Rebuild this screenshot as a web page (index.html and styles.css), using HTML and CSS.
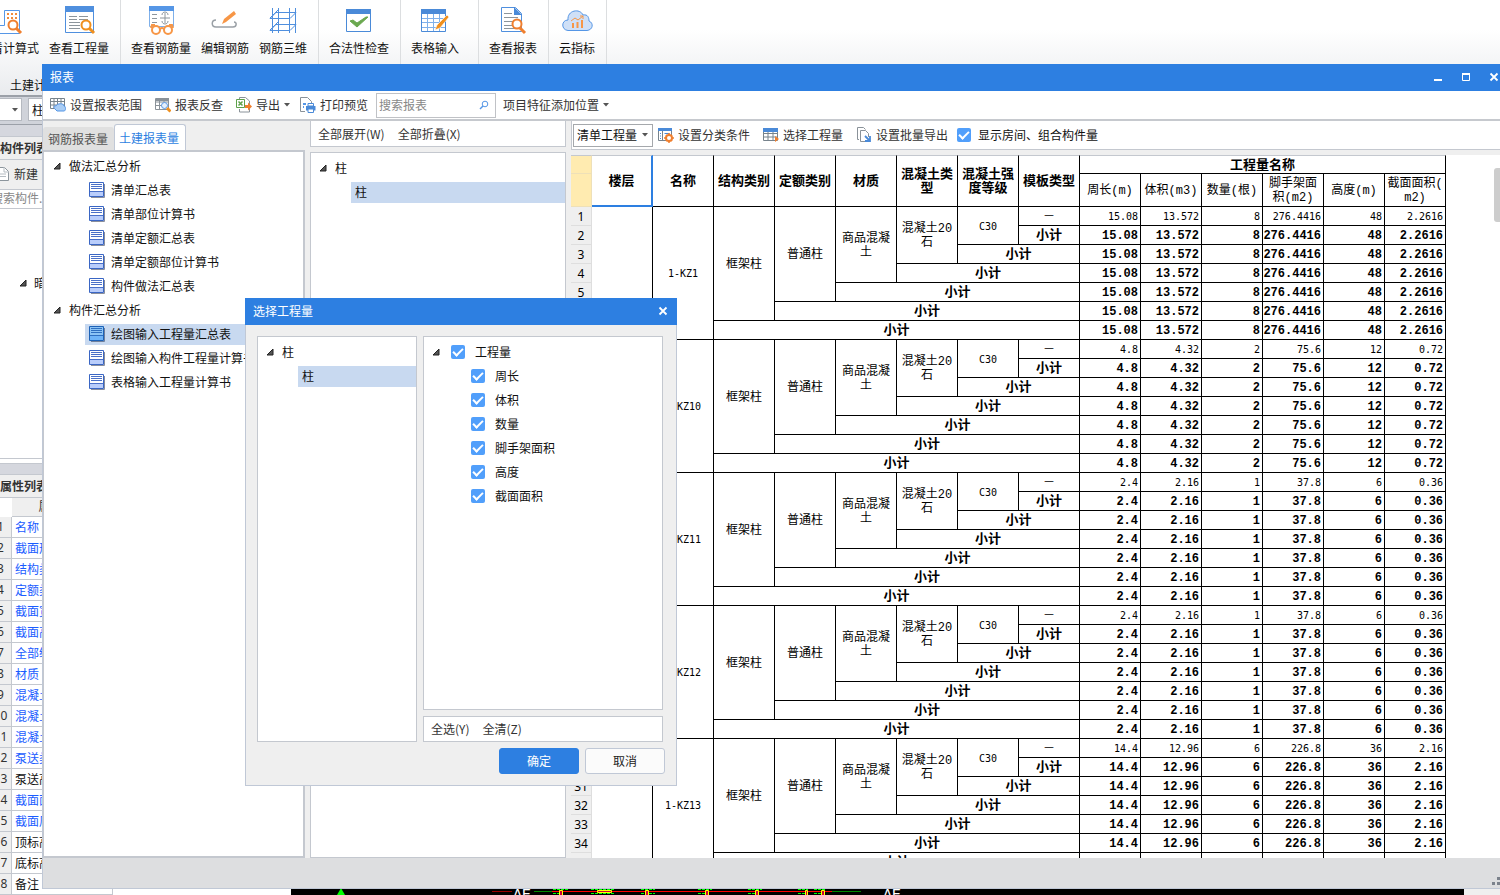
FILE: index.html
```html
<!DOCTYPE html>
<html lang="zh-CN">
<head>
<meta charset="utf-8">
<title>报表</title>
<link rel="stylesheet" href="styles.css">
</head>
<body>
<svg class="defs" aria-hidden="true">
  <symbol id="i-arrow" viewBox="0 0 8 8"><path d="M7 1v6H1z" fill="#555" stroke="#222" stroke-width="1"/></symbol>
  <symbol id="i-caret" viewBox="0 0 6 4"><path d="M0 0h6L3 3.5z" fill="#555"/></symbol>
  <symbol id="i-doc" viewBox="0 0 16 16"><path d="M2 15.5h13.5V2" fill="none" stroke="#8a8f9c"/><path d="M.5.500h14v14H.5z" fill="#fff" stroke="#3a66c4"/><path d="M1 10h13v4H1z" fill="#b9cdfb"/><path d="M1 9.500h13M2 2.500h11M2 4.500h11M2 6.500h11" stroke="#4a70c8" fill="none"/></symbol>
  <symbol id="i-doc-on" viewBox="0 0 16 16"><path d="M2 15.5h13.5V2" fill="none" stroke="#70809c"/><path d="M.5.500h14v14H.5z" fill="#8cc4f5" stroke="#1c62b8"/><path d="M1 10h13v4H1z" fill="#6fb4f8"/><path d="M1 9.500h13M2 2.500h11M2 4.500h11M2 6.500h11" stroke="#2f6fc0" fill="none"/></symbol>
</svg>
<div class="app">
  <header class="ribbon">
    <nav class="ribbon-groups">
      <div class="group">
        <button class="tool"><svg viewBox="0 0 28 28"><path d="M9.500 4.500h15v23H.5v-8h9z" fill="#fff" stroke="#5596e6"/><path d="M12 7h2v2h-2zM16 7h2v2h-2zM20 7h2v2h-2zM12 11h2v2h-2zM16 11h2v2h-2zM20 11h2v2h-2z" fill="#f08a3c"/><circle cx="18" cy="19" r="4.500" fill="#fff" stroke="#f07f2e" stroke-width="2"/><path d="M21 22l5 5" stroke="#f07f2e" stroke-width="3"/></svg>查看计算式</button>
        <button class="tool"><svg viewBox="0 0 28 28"><path d="M.5.500h28v26H.5z" fill="#fff" stroke="#4f8fde"/><path d="M0 0h29v6H0z" fill="#4f8fde"/><path d="M4 10.500h8m2 0h9M4 13.500h8m2 0h9M4 16.500h11M4 19.500h11M4 22.500h11" stroke="#8c959c"/><circle cx="21" cy="19" r="4.500" fill="#fff" stroke="#f0901e" stroke-width="2"/><path d="M24 22l5 5" stroke="#f0901e" stroke-width="3"/></svg>查看工程量</button>
      </div>
      <div class="group">
        <button class="tool"><svg viewBox="0 0 28 28"><path d="M2.500.500h24v20h-24z" fill="#fff" stroke="#7fb0ea"/><path d="M2 0h25v5H2z" fill="#5596e6"/><path d="M5 8.500h5M5 12.500h5M5 16.500h5M13 12h10M18 7v10M15 9c0-4 6-4 6 0M15 15c0 4 6 4 6 0" stroke="#8c959c" fill="none"/><g fill="#fff" stroke="#f79646" stroke-width="2"><circle cx="9" cy="24" r="4"/><circle cx="21" cy="24" r="4"/><path d="M13 23q2-2 4 0M4 22l1-3h3M26 22l-1-3h-3" fill="none"/></g></svg>查看钢筋量</button>
        <button class="tool"><svg viewBox="0 0 28 28"><path d="M5 14c-5 0-5 7 0 7h17c4 0 4-5 1-5" fill="none" stroke="#9aa0a6" stroke-width="1.500"/><path d="M11 18l2-5L23 5l2 3-10 8z" fill="#f79646"/></svg>编辑钢筋</button>
        <button class="tool"><svg viewBox="0 0 28 28"><path d="M3.500 2v25M9.500 2v25M20.500 2v25M26.500 2v25M1 12.500h20l6-6H7zM1 24.500h20l6-6H7zM1 12l8-8M1 24l8-8" fill="none" stroke="#4f8fde"/></svg>钢筋三维</button>
      </div>
      <div class="group">
        <button class="tool"><svg viewBox="0 0 28 28"><path d="M1.500 3.500h24v22h-24z" fill="#fff" stroke="#4a8ad8"/><path d="M1 3h25v5H1z" fill="#4a8ad8"/><path d="M5 15l7 6L23 11h-2l-9 6-4-3z" fill="#6aa84f" stroke="#6aa84f"/></svg>合法性检查</button>
      </div>
      <div class="group group-wide">
        <button class="tool"><svg viewBox="0 0 28 28"><path d="M.5 3.500h24v22H.5z" fill="#fff" stroke="#4a8ad8"/><path d="M0 3h25v5H0z" fill="#4a8ad8"/><path d="M1 12.500h23M1 16.500h23M1 21.500h23M6.500 8v17M12.500 8v17M18.500 8v17" stroke="#7fb0ea"/><path d="M14 24l2-5L26 9l2 2-9 11z" fill="#f0901e" stroke="#fff" stroke-width=".6"/></svg>表格输入</button>
      </div>
      <div class="group">
        <button class="tool"><svg viewBox="0 0 28 28"><path d="M2.500 1.500h14l6 6v18h-20z" fill="#fff" stroke="#4f8fde"/><path d="M15 1l8 8h-8z" fill="#4a8ad8"/><path d="M5 7.500h8M5 11.500h14M5 15.500h9M5 19.500h8M5 22.500h12" stroke="#8c959c"/><circle cx="18" cy="18" r="4.500" fill="#fff" stroke="#f07f2e" stroke-width="2"/><path d="M21 22l5 5" stroke="#f07f2e" stroke-width="3"/></svg>查看报表</button>
      </div>
      <div class="group">
        <button class="tool"><svg class="cloud" viewBox="0 0 31 28"><path d="M6 24.500C-1 24-1 14 6 14 5 4 18 2 21 9c5-1 6 3 6 6 5 2 4 9-2 9.500z" fill="#cfe0f7" stroke="#5596e6"/><path d="M10 22v-5h2v5zM14.500 22v-6h2v6zM19 22v-8h2v8z" fill="#f79646"/><path d="M9 15l4-3 3 2 5-4m-3 0h3v3" fill="none" stroke="#f79646"/></svg>云指标</button>
      </div>
    </nav>
    <div class="ribbon-caption">土建计</div>
  </header>

  <div class="workspace">
    <aside class="side">
      <div class="combos">
        <span class="combo combo-a"><svg class="caret"><use href="#i-caret"/></svg></span>
        <span class="combo combo-b">柱</span>
      </div>
      <div class="splitter"></div>
      <h2 class="panel-title">构件列表</h2>
      <div class="side-tools"><button class="btn flush"><svg class="icon" viewBox="0 0 16 16"><path d="M1.500 1.500h9l4 4v9h-13z" fill="#fff" stroke="#8c959c"/><path d="M10 1v5h5M4 8h8M4 10.500h8" fill="none" stroke="#b5bcc2"/></svg>新建</button></div>
      <div class="side-search">搜索构件...</div>
      <div class="side-tree"><svg class="arrow"><use href="#i-arrow"/></svg><span>暗柱</span></div>
      <div class="splitter second"></div>
      <h2 class="panel-title">属性列表</h2>
      <table class="props">
        <colgroup><col class="c-num"><col></colgroup>
        <thead><tr><th></th><th>属性名称</th></tr></thead>
        <tbody>
          <tr><th>1</th><td>名称</td></tr>
          <tr><th>2</th><td>截面形状</td></tr>
          <tr><th>3</th><td>结构类别</td></tr>
          <tr><th>4</th><td>定额类别</td></tr>
          <tr><th>5</th><td>截面宽度</td></tr>
          <tr><th>6</th><td>截面高度</td></tr>
          <tr><th>7</th><td>全部纵筋</td></tr>
          <tr><th>8</th><td>材质</td></tr>
          <tr><th>9</th><td>混凝土类型</td></tr>
          <tr><th>10</th><td>混凝土强度</td></tr>
          <tr><th>11</th><td>混凝土外加</td></tr>
          <tr><th>12</th><td>泵送类型</td></tr>
          <tr><th>13</th><td class="plain">泵送高度</td></tr>
          <tr><th>14</th><td>截面面积</td></tr>
          <tr><th>15</th><td>截面周长</td></tr>
          <tr><th>16</th><td class="plain">顶标高</td></tr>
          <tr><th>17</th><td class="plain">底标高</td></tr>
          <tr><th>18</th><td class="plain">备注</td></tr>
        </tbody>
      </table>
    </aside>
    <div class="side-rest"></div>
    <div class="canvas">
      <svg class="drawing" width="640" height="7" viewBox="0 0 640 7">
        <path d="M46 7l4-7 4 7z" fill="#0f0"/>
        <path d="M201 3.500h20" stroke="#900"/><path d="M243 3.500h18M540 3.500h30" stroke="#080"/><path d="M261 3.500h280" stroke="red"/>
        <g fill="none" stroke="#0f0" stroke-dasharray="3 1"><path d="M262 1.500h16M262 5.500h8M300 1.500h24M300 5.500h24M350 1.500h14M350 5.500h14M407 1.500h14M407 5.500h8M457 1.500h14M457 5.500h8M507 1.500h10M507 5.500h8M523 1.500h12M523 5.500h8"/></g>
        <g fill="#c03" stroke="#ff0"><path d="M268.500 2.500h3v5h-3zM306.500 2.500h14v2h-14zM354.500 2.500h3v5h-3zM414.500 2.500h3v5h-3zM464.500 2.500h3v5h-3zM514.500 2.500h2v5h-2zM530.500 2.500h3v5h-3z"/></g>
        <text x="222" y="11">AE</text><text x="592" y="11">AE</text>
      </svg>
    </div>
    <div class="canvas-edge"></div>
  </div>

  <section class="window">
    <header class="titlebar"><h1>报表</h1>
      <div class="winbtns">
        <button aria-label="最小化"><svg viewBox="0 0 10 10"><path d="M1 8h8" stroke="#fff" stroke-width="2"/></svg></button>
        <button aria-label="最大化"><svg viewBox="0 0 10 10"><path d="M1.500 2v6.500h7V2z" fill="none" stroke="#fff"/><path d="M1 2h8" stroke="#fff" stroke-width="2"/></svg></button>
        <button aria-label="关闭"><svg viewBox="0 0 10 10"><path d="M1.500 1.500l7 7M8.500 1.500l-7 7" stroke="#fff" stroke-width="1.800"/></svg></button>
      </div>
    </header>
    <div class="toolbar main-tools">
      <button class="btn"><svg class="icon" viewBox="0 0 16 16"><path d="M.5 1.500h14v10H.5zM.5 4.500h14M.5 8h14M4 1v10M7.500 1v10M11 1v10" fill="none" stroke="#77838c"/><path d="M5 12c-2-1-1-4 1-3 1-3 8-3 8 0 2 0 2 5 0 5H7z" fill="#a9cdf5" stroke="#5596e6"/></svg>设置报表范围</button>
      <button class="btn"><svg class="icon" viewBox="0 0 16 16"><path d="M.5 1.500h13v11H.5zM.5 5h13M.5 8.500h7M4.500 1v12M9 1v4" fill="none" stroke="#8a9299"/><path d="M1 1h13v3H1z" fill="#8a9299"/><circle cx="9.500" cy="8.500" r="3" fill="#e4effc" stroke="#5596e6"/><path d="M12 11l3.500 3.500" stroke="#f0901e" stroke-width="3"/></svg>报表反查</button>
      <button class="btn drop"><svg class="icon" viewBox="0 0 16 16"><path d="M3.500 3V.5h6l4 3.500v11h-10V12" fill="none" stroke="#8a9299"/><path d="M.5 2.500h8v8h-8z" fill="#fff" stroke="#5da14a"/><path d="M2.500 4.500l4 4M6.500 4.500l-4 4" stroke="#5da14a" stroke-width="1.500"/><path d="M9 8h3V5.500l4 4-4 4V11H9z" fill="#f07f2e"/></svg>导出<svg class="caret"><use href="#i-caret"/></svg></button>
      <button class="btn"><svg class="icon" viewBox="0 0 16 16"><path d="M5 14.500H.5V.5h7l4 4V7" fill="none" stroke="#8a9299"/><path d="M3 7h3M3 10h1" stroke="#5596e6" stroke-width="2"/><path d="M6 9h9.500v4.500H6z" fill="#4a8ad8"/><path d="M8 6.500h5.500V9H8zM8 12h5.500v3.500H8z" fill="#fff" stroke="#4a8ad8"/></svg>打印预览</button>
      <div class="search"><input type="text" placeholder="搜索报表" aria-label="搜索报表"><svg viewBox="0 0 10 10"><circle cx="6" cy="4" r="2.800" fill="none" stroke="#5596e6"/><path d="M4 6L1 9" stroke="#5596e6" stroke-width="1.500"/></svg></div>
      <button class="btn drop">项目特征添加位置<svg class="caret"><use href="#i-caret"/></svg></button>
    </div>
    <div class="body">
      <div class="col-left">
        <div class="tabs"><button class="tab">钢筋报表量</button><button class="tab active">土建报表量</button></div>
        <ul class="tree report-tree">
          <li class="node"><svg class="arrow"><use href="#i-arrow"/></svg>做法汇总分析</li>
          <li class="leaf"><span><svg class="icon"><use href="#i-doc"/></svg>清单汇总表</span></li>
          <li class="leaf"><span><svg class="icon"><use href="#i-doc"/></svg>清单部位计算书</span></li>
          <li class="leaf"><span><svg class="icon"><use href="#i-doc"/></svg>清单定额汇总表</span></li>
          <li class="leaf"><span><svg class="icon"><use href="#i-doc"/></svg>清单定额部位计算书</span></li>
          <li class="leaf"><span><svg class="icon"><use href="#i-doc"/></svg>构件做法汇总表</span></li>
          <li class="node"><svg class="arrow"><use href="#i-arrow"/></svg>构件汇总分析</li>
          <li class="leaf selected"><span><svg class="icon"><use href="#i-doc-on"/></svg>绘图输入工程量汇总表</span></li>
          <li class="leaf"><span><svg class="icon"><use href="#i-doc"/></svg>绘图输入构件工程量计算书</span></li>
          <li class="leaf"><span><svg class="icon"><use href="#i-doc"/></svg>表格输入工程量计算书</span></li>
        </ul>
      </div>
      <div class="col-mid">
        <div class="boxbar"><button class="btn">全部展开(W)</button><button class="btn">全部折叠(X)</button></div>
        <ul class="tree box">
          <li class="node"><svg class="arrow"><use href="#i-arrow"/></svg>柱</li>
          <li class="leaf selected"><span>柱</span></li>
        </ul>
      </div>
      <div class="col-right">
        <div class="toolbar sheet-tools">
          <div class="select"><select aria-label="工程量类型"><option>清单工程量</option></select><svg class="caret"><use href="#i-caret"/></svg></div>
          <button class="btn"><svg class="icon" viewBox="0 0 16 16"><path d="M.5 1.500h13v12H.5zM4.500 2v11" fill="#fff" stroke="#77838c"/><path d="M0 1h14v3H0z" fill="#4a8ad8"/><path d="M2 6.500h1M2 9h1M2 11.500h1M6.500 6.500h5" stroke="#4a8ad8"/><circle cx="11" cy="11" r="3" fill="#fff" stroke="#f07f2e" stroke-width="2"/><path d="M11 6v2M11 14v2M6 11h2M14 11h2M8 8l1 1M13 13l1 1M14 8l-1 1M8 14l1-1" stroke="#f07f2e" stroke-width="1.500"/></svg>设置分类条件</button>
          <button class="btn"><svg class="icon" viewBox="0 0 16 16"><path d="M.5 2.500h14v11H.5zM.5 6.500h14M.5 10h14M5 5v8M10 5v8" fill="#fff" stroke="#77838c"/><path d="M0 1h15v4H0z" fill="#4a8ad8"/><path d="M12 9v6l4-3z" fill="#f07f2e"/></svg>选择工程量</button>
          <button class="btn"><svg class="icon" viewBox="0 0 16 16"><path d="M3 12.500H1.500V.5h6l2 2" fill="none" stroke="#8a9299"/><path d="M10 14.500H4.500v-11h5l3 3V10" fill="#fff" stroke="#8a9299"/><path d="M9 9l4 4m1-4v5H9" fill="none" stroke="#4a8ad8" stroke-width="1.800"/></svg>设置批量导出</button>
          <label class="check"><input type="checkbox" checked>显示房间、组合构件量</label>
        </div>
        <div class="sheet">
          <table class="grid">
            <colgroup><col class="c-row"><col span="14" class="c-data"></colgroup>
            <thead>
              <tr><th class="corner"></th><th rowspan="2" class="current">楼层</th><th rowspan="2">名称</th><th rowspan="2">结构类别</th><th rowspan="2">定额类别</th><th rowspan="2">材质</th><th rowspan="2">混凝土类型</th><th rowspan="2">混凝土强度等级</th><th rowspan="2">模板类型</th><th colspan="6">工程量名称</th></tr>
              <tr class="units"><th class="corner"></th><th>周长(m)</th><th>体积(m3)</th><th>数量(根)</th><th>脚手架面积(m2)</th><th>高度(m)</th><th>截面面积(<br>m2)</th></tr>
            </thead>
            <tbody>
              <tr><th>1</th><td rowspan="35"></td><td rowspan="7" class="code">1-KZ1</td><td rowspan="6">框架柱</td><td rowspan="5">普通柱</td><td rowspan="4">商品混凝土</td><td rowspan="3">混凝土20石</td><td rowspan="2" class="code">C30</td><td>－</td><td class="n">15.08</td><td class="n">13.572</td><td class="n">8</td><td class="n">276.4416</td><td class="n">48</td><td class="n">2.2616</td></tr>
              <tr class="sum"><th>2</th><td>小计</td><td class="n">15.08</td><td class="n">13.572</td><td class="n">8</td><td class="n">276.4416</td><td class="n">48</td><td class="n">2.2616</td></tr>
              <tr class="sum"><th>3</th><td colspan="2">小计</td><td class="n">15.08</td><td class="n">13.572</td><td class="n">8</td><td class="n">276.4416</td><td class="n">48</td><td class="n">2.2616</td></tr>
              <tr class="sum"><th>4</th><td colspan="3">小计</td><td class="n">15.08</td><td class="n">13.572</td><td class="n">8</td><td class="n">276.4416</td><td class="n">48</td><td class="n">2.2616</td></tr>
              <tr class="sum"><th>5</th><td colspan="4">小计</td><td class="n">15.08</td><td class="n">13.572</td><td class="n">8</td><td class="n">276.4416</td><td class="n">48</td><td class="n">2.2616</td></tr>
              <tr class="sum"><th>6</th><td colspan="5">小计</td><td class="n">15.08</td><td class="n">13.572</td><td class="n">8</td><td class="n">276.4416</td><td class="n">48</td><td class="n">2.2616</td></tr>
              <tr class="sum"><th>7</th><td colspan="6">小计</td><td class="n">15.08</td><td class="n">13.572</td><td class="n">8</td><td class="n">276.4416</td><td class="n">48</td><td class="n">2.2616</td></tr>

              <tr><th>8</th><td rowspan="7" class="code">1-KZ10</td><td rowspan="6">框架柱</td><td rowspan="5">普通柱</td><td rowspan="4">商品混凝土</td><td rowspan="3">混凝土20石</td><td rowspan="2" class="code">C30</td><td>－</td><td class="n">4.8</td><td class="n">4.32</td><td class="n">2</td><td class="n">75.6</td><td class="n">12</td><td class="n">0.72</td></tr>
              <tr class="sum"><th>9</th><td>小计</td><td class="n">4.8</td><td class="n">4.32</td><td class="n">2</td><td class="n">75.6</td><td class="n">12</td><td class="n">0.72</td></tr>
              <tr class="sum"><th>10</th><td colspan="2">小计</td><td class="n">4.8</td><td class="n">4.32</td><td class="n">2</td><td class="n">75.6</td><td class="n">12</td><td class="n">0.72</td></tr>
              <tr class="sum"><th>11</th><td colspan="3">小计</td><td class="n">4.8</td><td class="n">4.32</td><td class="n">2</td><td class="n">75.6</td><td class="n">12</td><td class="n">0.72</td></tr>
              <tr class="sum"><th>12</th><td colspan="4">小计</td><td class="n">4.8</td><td class="n">4.32</td><td class="n">2</td><td class="n">75.6</td><td class="n">12</td><td class="n">0.72</td></tr>
              <tr class="sum"><th>13</th><td colspan="5">小计</td><td class="n">4.8</td><td class="n">4.32</td><td class="n">2</td><td class="n">75.6</td><td class="n">12</td><td class="n">0.72</td></tr>
              <tr class="sum"><th>14</th><td colspan="6">小计</td><td class="n">4.8</td><td class="n">4.32</td><td class="n">2</td><td class="n">75.6</td><td class="n">12</td><td class="n">0.72</td></tr>

              <tr><th>15</th><td rowspan="7" class="code">1-KZ11</td><td rowspan="6">框架柱</td><td rowspan="5">普通柱</td><td rowspan="4">商品混凝土</td><td rowspan="3">混凝土20石</td><td rowspan="2" class="code">C30</td><td>－</td><td class="n">2.4</td><td class="n">2.16</td><td class="n">1</td><td class="n">37.8</td><td class="n">6</td><td class="n">0.36</td></tr>
              <tr class="sum"><th>16</th><td>小计</td><td class="n">2.4</td><td class="n">2.16</td><td class="n">1</td><td class="n">37.8</td><td class="n">6</td><td class="n">0.36</td></tr>
              <tr class="sum"><th>17</th><td colspan="2">小计</td><td class="n">2.4</td><td class="n">2.16</td><td class="n">1</td><td class="n">37.8</td><td class="n">6</td><td class="n">0.36</td></tr>
              <tr class="sum"><th>18</th><td colspan="3">小计</td><td class="n">2.4</td><td class="n">2.16</td><td class="n">1</td><td class="n">37.8</td><td class="n">6</td><td class="n">0.36</td></tr>
              <tr class="sum"><th>19</th><td colspan="4">小计</td><td class="n">2.4</td><td class="n">2.16</td><td class="n">1</td><td class="n">37.8</td><td class="n">6</td><td class="n">0.36</td></tr>
              <tr class="sum"><th>20</th><td colspan="5">小计</td><td class="n">2.4</td><td class="n">2.16</td><td class="n">1</td><td class="n">37.8</td><td class="n">6</td><td class="n">0.36</td></tr>
              <tr class="sum"><th>21</th><td colspan="6">小计</td><td class="n">2.4</td><td class="n">2.16</td><td class="n">1</td><td class="n">37.8</td><td class="n">6</td><td class="n">0.36</td></tr>

              <tr><th>22</th><td rowspan="7" class="code">1-KZ12</td><td rowspan="6">框架柱</td><td rowspan="5">普通柱</td><td rowspan="4">商品混凝土</td><td rowspan="3">混凝土20石</td><td rowspan="2" class="code">C30</td><td>－</td><td class="n">2.4</td><td class="n">2.16</td><td class="n">1</td><td class="n">37.8</td><td class="n">6</td><td class="n">0.36</td></tr>
              <tr class="sum"><th>23</th><td>小计</td><td class="n">2.4</td><td class="n">2.16</td><td class="n">1</td><td class="n">37.8</td><td class="n">6</td><td class="n">0.36</td></tr>
              <tr class="sum"><th>24</th><td colspan="2">小计</td><td class="n">2.4</td><td class="n">2.16</td><td class="n">1</td><td class="n">37.8</td><td class="n">6</td><td class="n">0.36</td></tr>
              <tr class="sum"><th>25</th><td colspan="3">小计</td><td class="n">2.4</td><td class="n">2.16</td><td class="n">1</td><td class="n">37.8</td><td class="n">6</td><td class="n">0.36</td></tr>
              <tr class="sum"><th>26</th><td colspan="4">小计</td><td class="n">2.4</td><td class="n">2.16</td><td class="n">1</td><td class="n">37.8</td><td class="n">6</td><td class="n">0.36</td></tr>
              <tr class="sum"><th>27</th><td colspan="5">小计</td><td class="n">2.4</td><td class="n">2.16</td><td class="n">1</td><td class="n">37.8</td><td class="n">6</td><td class="n">0.36</td></tr>
              <tr class="sum"><th>28</th><td colspan="6">小计</td><td class="n">2.4</td><td class="n">2.16</td><td class="n">1</td><td class="n">37.8</td><td class="n">6</td><td class="n">0.36</td></tr>

              <tr><th>29</th><td rowspan="7" class="code">1-KZ13</td><td rowspan="6">框架柱</td><td rowspan="5">普通柱</td><td rowspan="4">商品混凝土</td><td rowspan="3">混凝土20石</td><td rowspan="2" class="code">C30</td><td>－</td><td class="n">14.4</td><td class="n">12.96</td><td class="n">6</td><td class="n">226.8</td><td class="n">36</td><td class="n">2.16</td></tr>
              <tr class="sum"><th>30</th><td>小计</td><td class="n">14.4</td><td class="n">12.96</td><td class="n">6</td><td class="n">226.8</td><td class="n">36</td><td class="n">2.16</td></tr>
              <tr class="sum"><th>31</th><td colspan="2">小计</td><td class="n">14.4</td><td class="n">12.96</td><td class="n">6</td><td class="n">226.8</td><td class="n">36</td><td class="n">2.16</td></tr>
              <tr class="sum"><th>32</th><td colspan="3">小计</td><td class="n">14.4</td><td class="n">12.96</td><td class="n">6</td><td class="n">226.8</td><td class="n">36</td><td class="n">2.16</td></tr>
              <tr class="sum"><th>33</th><td colspan="4">小计</td><td class="n">14.4</td><td class="n">12.96</td><td class="n">6</td><td class="n">226.8</td><td class="n">36</td><td class="n">2.16</td></tr>
              <tr class="sum"><th>34</th><td colspan="5">小计</td><td class="n">14.4</td><td class="n">12.96</td><td class="n">6</td><td class="n">226.8</td><td class="n">36</td><td class="n">2.16</td></tr>
              <tr class="sum"><th></th><td colspan="6">小计</td><td class="n"></td><td class="n"></td><td class="n"></td><td class="n"></td><td class="n"></td><td class="n"></td></tr>
            </tbody>
          </table>
          <div class="thumb"></div>
        </div>
      </div>
    </div>
    <footer class="status"><svg viewBox="0 0 8 8"><path d="M5 0h3v3H5zM0 5h3v3H0zM5 5h3v3H5z" fill="#7b828c"/></svg></footer>
  </section>

  <section class="dialog" role="dialog" aria-labelledby="dlg-title">
    <header class="titlebar"><h1 id="dlg-title">选择工程量</h1>
      <div class="winbtns"><button aria-label="关闭"><svg viewBox="0 0 10 10"><path d="M1.500 1.500l7 7M8.500 1.500l-7 7" stroke="#fff" stroke-width="1.800"/></svg></button></div>
    </header>
    <div class="dialog-body">
      <ul class="tree box kinds">
        <li class="node"><svg class="arrow"><use href="#i-arrow"/></svg>柱</li>
        <li class="leaf selected"><span>柱</span></li>
      </ul>
      <div class="quantities">
        <ul class="tree box checks">
          <li class="node"><svg class="arrow"><use href="#i-arrow"/></svg><label class="check"><input type="checkbox" checked>工程量</label></li>
          <li class="item"><label class="check"><input type="checkbox" checked>周长</label></li>
          <li class="item"><label class="check"><input type="checkbox" checked>体积</label></li>
          <li class="item"><label class="check"><input type="checkbox" checked>数量</label></li>
          <li class="item"><label class="check"><input type="checkbox" checked>脚手架面积</label></li>
          <li class="item"><label class="check"><input type="checkbox" checked>高度</label></li>
          <li class="item"><label class="check"><input type="checkbox" checked>截面面积</label></li>
        </ul>
        <div class="boxbar"><button class="btn">全选(Y)</button><button class="btn">全清(Z)</button></div>
      </div>
    </div>
    <footer class="dialog-actions"><button class="action primary">确定</button><button class="action">取消</button></footer>
  </section>
</div>
</body>
</html>
```

FILE: styles.css
```css
* { box-sizing: border-box; }
body {
  margin: 0;
  font: 12px/16px "Noto Sans CJK SC", "Noto Sans", sans-serif;
  color: #111;
}
h1, h2, ul { margin: 0; padding: 0; list-style: none; font-size: 12px; font-weight: 400; }
button, input, select { font: inherit; color: inherit; margin: 0; padding: 0; border: 0; background: none; }
svg { display: block; flex: none; }
.defs { position: absolute; width: 0; height: 0; }
.icon { width: 16px; height: 16px; }
.arrow { width: 8px; height: 8px; }
.caret { width: 6px; height: 4px; }
.app { position: relative; height: 100vh; overflow: hidden; display: flex; flex-direction: column; background: #fff; }

/* Ribbon */
.ribbon { flex: none; height: 97px; border-bottom: 2px solid #9ba0a8; background: linear-gradient(#fff 30px, #e9ebee); }
.ribbon-groups { display: flex; height: 65px; margin-left: -26px; }
.group { display: flex; padding: 0 6px 0 5px; border-right: 1px solid #dcdee0; }
.group:first-child { padding-left: 0; }
.group-wide { min-width: 78px; }
.tool { display: flex; flex-direction: column; align-items: center; gap: 6px; padding: 6px 5px 0; white-space: nowrap; }
.tool svg { width: 28px; height: 28px; overflow: visible; }
.tool .cloud { width: 31px; }
.ribbon-caption { padding: 12px 0 0 10px; }

/* Application behind the windows */
.workspace { flex: 1; min-height: 0; display: flex; overflow: hidden; }
.side { flex: none; width: 113px; border-right: 1px solid #c4c8cf; overflow: hidden; }
.combos { display: flex; gap: 6px; height: 28px; padding: 1px 0 3px; background: #d0d3da; border-bottom: 1px solid #9ba0a8; }
.combo { display: flex; align-items: center; background: #fff; border: 1px solid #b5b9c0; }
.combo-a { width: 22px; padding-left: 12px; border-left: 0; }
.combo-b { flex: 1; padding-left: 3px; }
.splitter { height: 12px; background: #d5d7de; border-bottom: 1px solid #c4c8cf; }
.panel-title { height: 23px; padding-top: 3px; background: #efefef; border-bottom: 1px solid #c4c8cf; font-weight: 700; color: #333; }
.side-tools { height: 30px; padding: 3px 0; background: #efefef; border-bottom: 1px solid #c4c8cf; margin-left: -10px; }
.side-search { height: 19px; border-bottom: 1px solid #c4c8cf; color: #888; margin-left: -9px; white-space: nowrap; }
.side-tree { display: flex; align-items: flex-start; gap: 7px; height: 250px; padding: 66px 0 0 19px; border-bottom: 1px solid #c4c8cf; }
.side-tree .arrow { margin-top: 4px; }
.splitter.second { margin-top: 4px; border-top: 1px solid #c4c8cf; }
.props { width: 124px; margin-left: -12px; table-layout: fixed; border-collapse: separate; border-spacing: 0; }
.c-num { width: 24px; }
.props tr { height: 21px; }
.props thead tr { height: 19px; }
.props th, .props td { padding: 0; border-bottom: 1px solid #c4c8cf; }
.props th { padding-left: 2px; background: #efefef; border-right: 1px solid #c4c8cf; font: 12px/16px "Noto Sans", "Noto Sans CJK SC", sans-serif; color: #333; }
.props thead th:first-child { background: #fff; border: 0; }
.props td { padding-left: 3px; color: #1a5cff; white-space: nowrap; }
.props .plain { color: #111; }
.side-rest { flex: none; width: 178px; background: #fff; }
.canvas { flex: 1; display: flex; align-items: flex-end; background: #000; overflow: hidden; }
.drawing { overflow: hidden; }
.drawing text { font: 15px/16px "Liberation Mono", monospace; fill: #fff; }
.canvas-edge { flex: none; width: 36px; background: #efefef; }

/* Report window */
.window {
  position: absolute; inset: 64px 0 6px 42px;
  display: flex; flex-direction: column;
  background: #efefef; border: solid #c0c8d6; border-width: 0 0 1px 1px;
}
.titlebar { flex: none; display: flex; align-items: center; justify-content: space-between; height: 27px; padding: 0 1px 1px 7px; margin-left: -1px; background: #2d7fe1; color: #fff; }
.window .titlebar { padding-left: 8px; }
.winbtns { display: flex; gap: 18px; }
.winbtns button, .winbtns svg { width: 10px; height: 10px; }
.toolbar { flex: none; display: flex; align-items: center; gap: 5px; background: #fff; }
.main-tools { height: 30px; padding-left: 3px; border-bottom: 2px solid #c6c9ce; }
.btn { display: flex; align-items: center; gap: 4px; height: 22px; padding: 0 4px; white-space: nowrap; color: #333; }
.drop { padding-right: 1px; }
.search { display: flex; align-items: center; width: 120px; height: 25px; margin: 0 -2px 0 -1px; padding: 0 6px 0 2px; border: 1px solid #c0c2c6; }
.search input { flex: 1; min-width: 0; outline: 0; }
.search input::placeholder { color: #888; opacity: 1; }
.search svg { width: 10px; height: 10px; }
.body { flex: 1; min-height: 0; display: flex; gap: 5px; }
.col-left { flex: none; width: 262px; display: flex; flex-direction: column; padding-top: 3px; }
.tabs { display: flex; align-items: flex-end; height: 26px; }
.tab { height: 23px; padding: 0 6px 0 5px; background: #e0e0e0; color: #555; border-radius: 3px 3px 0 0; }
.tab.active { height: 26px; padding-left: 4px; background: #fff; color: #2d7fe1; border: 1px solid #c0c8d6; border-bottom: 0; }
.tree { background: #fff; overflow: hidden; }
.tree li { display: flex; align-items: center; height: 24px; white-space: nowrap; }
.report-tree { flex: 1; padding-top: 2px; border: 2px solid #c4c8cf; border-left-width: 1px; }
.node { padding-left: 8px; gap: 8px; }
.report-tree .node { padding-left: 9px; }
.leaf { padding-left: 40px; }
.leaf span { flex: 1; display: flex; align-items: center; gap: 6px; height: 21px; padding-left: 4px; }
.report-tree .leaf { padding-left: 41px; }
.selected span { background: #c8d9f0; }
.col-mid { flex: none; width: 256px; display: flex; flex-direction: column; gap: 5px; }
.boxbar { flex: none; display: flex; align-items: center; gap: 5px; height: 26px; padding-left: 3px; background: #fff; border: 1px solid #c4c8cf; }
.col-mid .boxbar { border-top: 0; }
.box { flex: 1; padding-top: 3px; border: 1px solid #c4c8cf; }
.col-right { flex: 1; min-width: 0; display: flex; flex-direction: column; gap: 5px; }
.sheet-tools { height: 29px; padding-left: 1px; gap: 5px; border: solid #c4c8cf; border-width: 0 0 1px 1px; }
.select { display: flex; align-items: center; width: 80px; height: 23px; margin-right: -4px; padding-right: 4px; border: 1px solid #a5a8ac; }
.select select { flex: 1; min-width: 0; padding-left: 3px; appearance: none; outline: 0; }
.check { display: flex; align-items: center; gap: 7px; color: #111; }
.check input {
  appearance: none; display: flex; justify-content: center; align-items: center;
  width: 14px; height: 14px; border-radius: 2px; background: #519ffb;
}
.check input::after { content: ""; width: 8px; height: 4px; margin-bottom: 3px; border: solid #fff; border-width: 0 0 2px 2px; transform: rotate(-45deg); }
.status { flex: none; height: 30px; display: flex; justify-content: flex-end; align-items: flex-end; padding-bottom: 3px; background: #dddee0; }
.status svg { width: 8px; height: 8px; }

/* Quantity sheet */
.sheet { position: relative; flex: 1; min-height: 0; overflow: hidden; background: #fff; }
.thumb { position: absolute; top: 13px; right: 0; width: 6px; height: 54px; background: #cdcdcd; border-radius: 3px 0 0 3px; }
.grid { width: 875px; table-layout: fixed; border-collapse: separate; border-spacing: 0; color: #000; }
.c-row { width: 21px; }
.c-data { width: 61px; }
.grid tr { height: 19px; }
.grid th, .grid td {
  padding: 2px 0 0; border: solid #000; border-width: 0 1px 1px 0; text-align: center;
  font: 12px/14px "Liberation Mono", "Noto Sans CJK SC", monospace;
}
.grid td { padding: 2px 4px 0; }
.grid thead th { font-size: 13px; font-weight: 700; padding: 2px 4px 0; }
.grid thead tr:first-child th { border-top: 1px solid #c4c8cf; }
.grid .units { height: 33px; }
.grid .units th { font-size: 12px; font-weight: 400; padding: 2px 2px 0; }
.grid thead .current { border: solid #2d7fe1; border-width: 1px 2px 2px 0; }
.grid thead .corner, .grid tr.units .corner { background: #ffebb0; border-color: #eee0b8; }
.grid tbody th { background: #efefef; border-color: #dedede; font-family: "Noto Sans", sans-serif; }
.grid td.code { font: 10px/14px "DejaVu Sans Mono", monospace; }
.grid td.n { padding: 2px 2px 0 0; text-align: right; font: 10px/14px "DejaVu Sans Mono", monospace; }
.grid .sum td { font-size: 13px; font-weight: 700; }
.grid .sum td.n { font: 700 12px/14px "Liberation Mono", monospace; }

/* Quantity dialog */
.dialog { position: absolute; left: 245px; top: 298px; width: 432px; height: 488px; display: flex; flex-direction: column; background: #efefef; border: solid #c0c8d6; border-width: 0 1px 1px; }
.dialog .titlebar { margin-right: -1px; padding: 0 9px 1px 8px; }
.dialog-body { flex: 1; min-height: 0; display: flex; gap: 6px; padding: 11px 13px 0 11px; }
.kinds { flex: none; width: 160px; }
.quantities { flex: 1; display: flex; flex-direction: column; gap: 6px; }
.checks .check { gap: 10px; }
.checks .node { gap: 11px; }
.item { padding-left: 47px; }
.dialog-actions { flex: none; display: flex; justify-content: flex-end; gap: 6px; padding: 6px 11px 11px; }
.action { width: 80px; height: 26px; border: 1px solid #c0c8d6; border-radius: 3px; background: #fbfbfb; color: #222; }
.action.primary { background: #2d7fe1; border-color: #2d7fe1; color: #fff; }
```
